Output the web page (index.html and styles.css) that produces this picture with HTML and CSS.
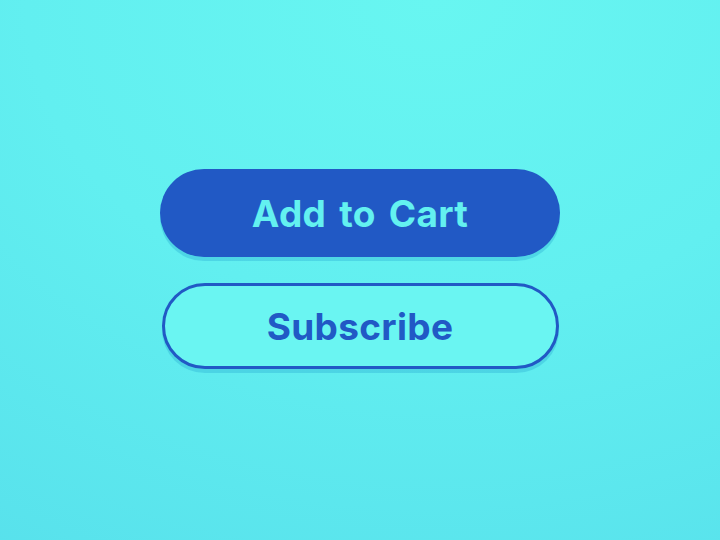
FILE: index.html
```html
<!DOCTYPE html>
<html>
<head>
<meta charset="utf-8">
<link rel="stylesheet" href="styles.css">
</head>
<body>
<main class="stage">
  <button class="btn btn-solid">Add to Cart</button>
  <button class="btn btn-outline">Subscribe</button>
</main>
</body>
</html>
```
FILE: styles.css
```css
html, body {
  margin: 0;
  padding: 0;
  width: 720px;
  height: 540px;
  overflow: hidden;
}
body {
  background: radial-gradient(ellipse 900px 700px at 60% 0%, #68f6f1 0%, #62eff0 45%, #56dfeb 100%);
  font-family: "Inter", "Noto Sans", sans-serif;
}
.stage {
  height: 538px;
  display: flex;
  flex-direction: column;
  align-items: center;
  justify-content: center;
  gap: 26px;
}
.btn {
  width: 400px;
  height: 88px;
  border-radius: 44px;
  font-family: inherit;
  font-weight: 700;
  font-size: 37px;
  letter-spacing: 0.3px;
  word-spacing: 4px;
  display: flex;
  align-items: center;
  justify-content: center;
  padding: 0;
  box-shadow: 0 4px 0 rgba(40, 170, 210, 0.35);
}
.btn-solid {
  background: #2159c5;
  color: #63f1f0;
  border: none;
}
.btn-outline {
  background: #6af5f2;
  color: #2159c5;
  border: 3px solid #2159c5;
  width: 397px;
  height: 86px;
}
```
